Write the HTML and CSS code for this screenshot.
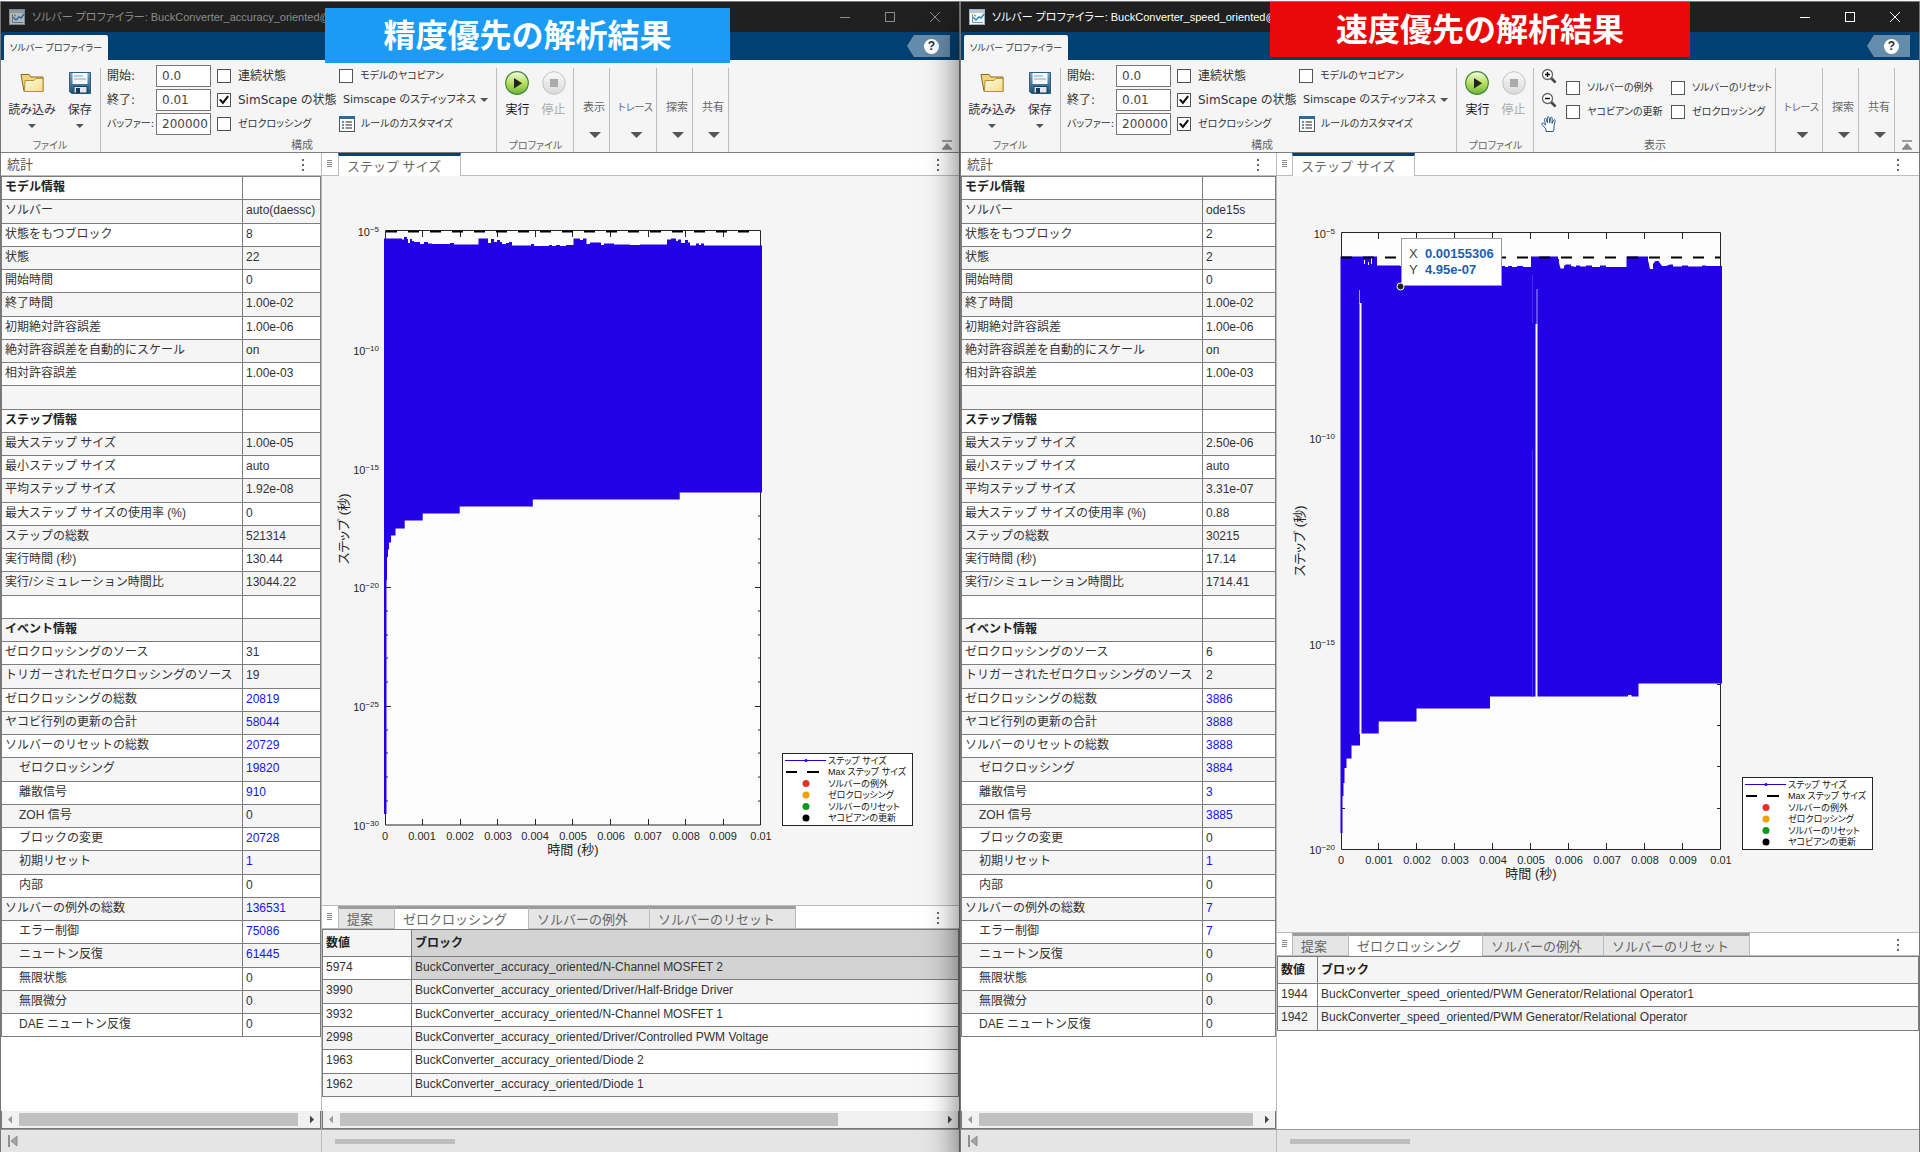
FILE: index.html
```html
<!DOCTYPE html>
<html lang="ja">
<head>
<meta charset="utf-8">
<title>ソルバー プロファイラー</title>
<link rel="stylesheet" href="styles.css">
</head>
<body>
<svg class="defs" aria-hidden="true">
  <defs>
    <linearGradient id="gFolder" x1="0" y1="0" x2="1" y2="1"><stop offset="0" stop-color="#fffdf0"/><stop offset="1" stop-color="#f6dc7c"/></linearGradient>
    <linearGradient id="gGreen" x1="0" y1="0" x2="0" y2="1"><stop offset="0" stop-color="#f4fbe6"/><stop offset=".5" stop-color="#b9e05e"/><stop offset="1" stop-color="#6db33f"/></linearGradient>
    <linearGradient id="gGray" x1="0" y1="0" x2="0" y2="1"><stop offset="0" stop-color="#fafafa"/><stop offset="1" stop-color="#d9d9d9"/></linearGradient>
    <linearGradient id="gSave" x1="0" y1="0" x2="0" y2="1"><stop offset="0" stop-color="#79a7c6"/><stop offset="1" stop-color="#1d4f78"/></linearGradient>
  </defs>
  <symbol id="i-app" viewBox="0 0 16 16"><rect x=".5" y=".5" width="15" height="15" fill="#f4f8fa" stroke="#9fb6c4"/><rect x="1" y="1" width="14" height="3" fill="#b9c9d3"/><path d="M3.5 5v8.5H14" fill="none" stroke="#7d97a8"/><path d="M4 8l3 3 3-3 2 1 3-4" fill="none" stroke="#2a8fd0" stroke-width="1.5"/><path d="M5 6l2 1" stroke="#e0a030" stroke-width="1.5"/></symbol>
  <symbol id="i-folder" viewBox="0 0 24 20"><path d="M1 1.500h8l2 2.500h12v14.500H4z" fill="#f3d37a" stroke="#8a6a1e"/><path d="M5 7.500h9l2-2h7v13H4.500z" fill="url(#gFolder)" stroke="#b98e2e"/></symbol>
  <symbol id="i-save" viewBox="0 0 22 22"><path d="M.5.5h21v21H2.500l-2-2z" fill="url(#gSave)" stroke="#2c5f86"/><rect x="3.500" y="1" width="15" height="11" fill="#f7fafc"/><path d="M5 4h9M5 7h12" stroke="#7f9fb8"/><path d="M5 14.500h13V21H5z" fill="#e4e7ea" stroke="#1b3f5e"/><rect x="7" y="16" width="4" height="5" fill="#143a5a"/></symbol>
  <symbol id="i-run" viewBox="0 0 24 24"><circle cx="12" cy="12" r="11.300" fill="url(#gGreen)" stroke="#3f8a35" stroke-width="1.200"/><path d="M9 7v10.500l8-5.300z" fill="#222"/></symbol>
  <symbol id="i-stop" viewBox="0 0 24 24"><circle cx="12" cy="12" r="11.300" fill="url(#gGray)" stroke="#c2c2c2"/><rect x="8" y="8" width="8" height="8" fill="#ababab"/></symbol>
  <symbol id="i-rule" viewBox="0 0 16 16"><rect x=".5" y=".5" width="15" height="15" fill="#fdfdfd" stroke="#555"/><rect x="0" y="0" width="16" height="3" fill="#2d6a9a"/><path d="M3 6h2M3 9h2M3 12h2" stroke="#2d6a9a" stroke-width="1.500"/><path d="M6.500 6H13M6.500 9H13M6.500 12H13" stroke="#222" stroke-width="1.200"/></symbol>
  <symbol id="i-zin" viewBox="0 0 16 16"><path d="M10 10l4.500 4.500" stroke="#444" stroke-width="2.500"/><circle cx="6.500" cy="6.500" r="5" fill="#fff" stroke="#666" stroke-width="1.300"/><path d="M4 6.500h5M6.500 4v5" stroke="#111" stroke-width="1.500"/></symbol>
  <symbol id="i-zout" viewBox="0 0 16 16"><path d="M10 10l4.500 4.500" stroke="#444" stroke-width="2.500"/><circle cx="6.500" cy="6.500" r="5" fill="#fff" stroke="#666" stroke-width="1.300"/><path d="M4 6.500h5" stroke="#111" stroke-width="1.500"/></symbol>
  <symbol id="i-hand" viewBox="0 0 16 16"><path d="M5 15.500V13L1 8.500c-.8-1 .5-2 1.500-1.200L4.500 9 3.500 3.500c-.2-1.300 1.300-1.600 1.700-.4L6.500 7 6.300 1.600c0-1.300 1.700-1.300 1.800 0L8.700 7l.8-5c.2-1.200 1.800-1 1.700.3L11 7.500l1.500-3.300c.5-1.100 2-.5 1.600.7L13 10v3l-.8 2.500z" fill="#fff" stroke="#2c5f8e"/></symbol>
  <symbol id="i-min" viewBox="0 0 10 10"><path d="M0 5.500h10" stroke="currentColor"/></symbol>
  <symbol id="i-max" viewBox="0 0 10 10"><rect x=".5" y=".5" width="9" height="9" fill="none" stroke="currentColor"/></symbol>
  <symbol id="i-close" viewBox="0 0 10 10"><path d="M0 0l10 10M10 0L0 10" stroke="currentColor"/></symbol>
  <symbol id="i-collapse" viewBox="0 0 10 10"><path d="M0 1h10M0 9.500h10" stroke="#a0a0a0" stroke-width="2"/><path d="M5 3l5 6H0z" fill="#8a8a8a"/></symbol>
  <symbol id="i-first" viewBox="0 0 10 12"><path d="M1 0v12" stroke="#8f8f8f" stroke-width="2"/><path d="M9 1v10L3 6z" fill="#a5a5a5" stroke="#8f8f8f"/></symbol>
</svg>

<main class="desktop">

<section class="window inactive w-accuracy">
  <header class="titlebar">
    <svg class="app-icon"><use href="#i-app"/></svg>
    <h1>ソルバー プロファイラー: BuckConverter_accuracy_oriented@</h1>
    <div class="controls">
      <button aria-label="最小化"><svg><use href="#i-min"/></svg></button>
      <button aria-label="最大化"><svg><use href="#i-max"/></svg></button>
      <button aria-label="閉じる"><svg><use href="#i-close"/></svg></button>
    </div>
  </header>
  <nav class="ribbon-tabs"><button class="ribbon-tab">ソルバー プロファイラー</button><button class="help" aria-label="ヘルプ"><span>?</span></button></nav>
  <div class="banner blue">精度優先の解析結果</div>

  <div class="toolstrip">
    <div class="section file">
      <div class="big-buttons">
        <button class="big"><svg class="folder"><use href="#i-folder"/></svg><span>読み込み</span><i class="caret"></i></button>
        <button class="big"><svg class="save"><use href="#i-save"/></svg><span>保存</span><i class="caret"></i></button>
      </div>
      <div class="section-name kana">ファイル</div>
    </div>
    <div class="section config">
      <div class="config-grid">
        <label for="a-start">開始:</label><input id="a-start" type="text" value="0.0">
        <label class="check"><input type="checkbox">連続状態</label>
        <label class="check kana"><input type="checkbox">モデルのヤコビアン</label>
        <label for="a-stop">終了:</label><input id="a-stop" type="text" value="0.01">
        <label class="check"><input type="checkbox" checked>SimScape の状態</label>
        <button class="drop">Simscape のスティッフネス<i class="caret"></i></button>
        <label class="kana" for="a-buf">バッファー:</label><input id="a-buf" type="text" value="200000">
        <label class="check kana"><input type="checkbox">ゼロクロッシング</label>
        <button class="rule kana"><svg><use href="#i-rule"/></svg>ルールのカスタマイズ</button>
      </div>
      <div class="section-name">構成</div>
    </div>
    <div class="section profile">
      <div class="big-buttons">
        <button class="big run"><svg><use href="#i-run"/></svg><span>実行</span></button>
        <button class="big stop" disabled><svg><use href="#i-stop"/></svg><span>停止</span></button>
      </div>
      <div class="section-name kana">プロファイル</div>
    </div>
    <button class="section folded">表示<i class="caret wide"></i></button>
    <button class="section folded trace">トレース<i class="caret wide"></i></button>
    <button class="section folded">探索<i class="caret wide"></i></button>
    <button class="section folded">共有<i class="caret wide"></i></button>
    <button class="collapse" aria-label="折りたたむ"><svg><use href="#i-collapse"/></svg></button>
  </div>

  <div class="content">
    <section class="stats">
      <header class="panel-head"><h2>統計</h2><button class="dots" aria-label="メニュー"></button></header>
      <table class="stats-table">
        <tr><th>モデル情報</th><td></td></tr>
        <tr><td>ソルバー</td><td>auto(daessc)</td></tr>
        <tr><td>状態をもつブロック</td><td>8</td></tr>
        <tr><td>状態</td><td>22</td></tr>
        <tr><td>開始時間</td><td>0</td></tr>
        <tr><td>終了時間</td><td>1.00e-02</td></tr>
        <tr><td>初期絶対許容誤差</td><td>1.00e-06</td></tr>
        <tr><td>絶対許容誤差を自動的にスケール</td><td>on</td></tr>
        <tr><td>相対許容誤差</td><td>1.00e-03</td></tr>
        <tr><td></td><td></td></tr>
        <tr><th>ステップ情報</th><td></td></tr>
        <tr><td>最大ステップ サイズ</td><td>1.00e-05</td></tr>
        <tr><td>最小ステップ サイズ</td><td>auto</td></tr>
        <tr><td>平均ステップ サイズ</td><td>1.92e-08</td></tr>
        <tr><td>最大ステップ サイズの使用率 (%)</td><td>0</td></tr>
        <tr><td>ステップの総数</td><td>521314</td></tr>
        <tr><td>実行時間 (秒)</td><td>130.44</td></tr>
        <tr><td>実行/シミュレーション時間比</td><td>13044.22</td></tr>
        <tr><td></td><td></td></tr>
        <tr><th>イベント情報</th><td></td></tr>
        <tr><td>ゼロクロッシングのソース</td><td>31</td></tr>
        <tr><td>トリガーされたゼロクロッシングのソース</td><td>19</td></tr>
        <tr><td>ゼロクロッシングの総数</td><td><a href="#">20819</a></td></tr>
        <tr><td>ヤコビ行列の更新の合計</td><td><a href="#">58044</a></td></tr>
        <tr><td>ソルバーのリセットの総数</td><td><a href="#">20729</a></td></tr>
        <tr class="sub"><td>ゼロクロッシング</td><td><a href="#">19820</a></td></tr>
        <tr class="sub"><td>離散信号</td><td><a href="#">910</a></td></tr>
        <tr class="sub"><td>ZOH 信号</td><td>0</td></tr>
        <tr class="sub"><td>ブロックの変更</td><td><a href="#">20728</a></td></tr>
        <tr class="sub"><td>初期リセット</td><td><a href="#">1</a></td></tr>
        <tr class="sub"><td>内部</td><td>0</td></tr>
        <tr><td>ソルバーの例外の総数</td><td><a href="#">136531</a></td></tr>
        <tr class="sub"><td>エラー制御</td><td><a href="#">75086</a></td></tr>
        <tr class="sub"><td>ニュートン反復</td><td><a href="#">61445</a></td></tr>
        <tr class="sub"><td>無限状態</td><td>0</td></tr>
        <tr class="sub"><td>無限微分</td><td>0</td></tr>
        <tr class="sub"><td>DAE ニュートン反復</td><td>0</td></tr>
      </table>
      <div class="scroll"><i class="arrow-left"></i><span class="thumb"></span><i class="arrow-right"></i></div>
    </section>

    <div class="right">
      <section class="plot">
        <header class="panel-head tabs"><i class="grip"></i><button class="tab current">ステップ サイズ</button><button class="dots" aria-label="メニュー"></button></header>
        <svg class="figure" viewBox="322 176 637 729">
          <rect x="385" y="231" width="376" height="594" fill="#fcfcfc"/>
          <path d="M385.500 230.500H760.500V825H385.500z" class="axis"/>
          <path class="axis" d="M422.500 231v6M460.500 231v6M497.500 231v6M535.500 231v6M572.500 231v6M610.500 231v6M648.500 231v6M685.500 231v6M723.500 231v6M422.500 825v-6M460.500 825v-6M497.500 825v-6M535.500 825v-6M572.500 825v-6M610.500 825v-6M648.500 825v-6M685.500 825v-6M723.500 825v-6"/>
          <path class="axis" d="M386 587.500h5M386 706.500h5M760 587.500h-5M760 706.500h-5M760 516h-2M760 539h-2M760 563h-2M760 611h-2M760 635h-2M760 658h-2M760 682h-2M760 730h-2M760 753h-2M760 777h-2M760 801h-2M386 611h2M386 635h2M386 658h2M386 682h2M386 730h2M386 753h2M386 777h2M386 801h2"/>
          <path d="M386 231.500h374" stroke="#000" stroke-width="2" stroke-dasharray="11 11"/>
          <path class="data" d="M384 238.500H402V239.500H404V237H407V239H408V243H410V239H412V241H414V242H420V244H424V242H428V243.500H432V244H450V243H454V244.500H478.500V238.500H488V243H491V239H494V242H497V240H500V242H502V244H506V243H509V242H512V245.500H531V244H534V246H549V245H552V246H556V245H560V246H566V245H573.500V238.500H580V240H583V238.500H586.500V244H590V242.500H601V245H604V243.500H614V244.500H630V245H640V244.500H667V239.500H671V238.500H676V241H678V239.500H681V243H685V240H688V242.500H690V245.500H696V243.500H699V245H701V243.500H704V245.500H762V492.500H679.700V499.500H532.800V506.500H459.700V513.500H422.700V520.500H404.700V528.500H395.500V535.500H391V542.500H389V549.500H388V557H387V580H386.500V814H384z"/>
          <g class="ticks">
            <text x="385" y="840">0</text><text x="422" y="840">0.001</text><text x="460" y="840">0.002</text><text x="498" y="840">0.003</text><text x="535" y="840">0.004</text><text x="573" y="840">0.005</text><text x="611" y="840">0.006</text><text x="648" y="840">0.007</text><text x="686" y="840">0.008</text><text x="723" y="840">0.009</text><text x="761" y="840">0.01</text>
          </g>
          <g class="ylabels">
            <text x="379" y="236">10<tspan class="exp" dy="-4">−5</tspan></text>
            <text x="379" y="355">10<tspan class="exp" dy="-4">−10</tspan></text>
            <text x="379" y="474">10<tspan class="exp" dy="-4">−15</tspan></text>
            <text x="379" y="592">10<tspan class="exp" dy="-4">−20</tspan></text>
            <text x="379" y="711">10<tspan class="exp" dy="-4">−25</tspan></text>
            <text x="379" y="830">10<tspan class="exp" dy="-4">−30</tspan></text>
          </g>
          <text class="axis-title" x="573" y="854">時間 (秒)</text>
          <text class="axis-title" transform="translate(348 529) rotate(-90)">ステップ (秒)</text>
          <g class="legend" transform="translate(782 753)">
            <rect x=".5" y=".5" width="130" height="72"/>
            <path d="M3 7.500h41" stroke="#2400e6"/><circle cx="24" cy="7.500" r="1.500" fill="#2400e6"/>
            <path d="M4 19h11M25 19h12" stroke="#000" stroke-width="2"/>
            <circle cx="24" cy="30.500" r="3.500" fill="#e0352b"/><circle cx="24" cy="42" r="3.500" fill="#eda100"/><circle cx="24" cy="53.500" r="3.500" fill="#0b9a1c"/><circle cx="24" cy="65" r="3.500" fill="#000"/>
            <text x="46" y="11">ステップ サイズ</text><text x="46" y="22">Max ステップ サイズ</text><text x="46" y="34">ソルバーの例外</text><text x="46" y="45">ゼロクロッシング</text><text x="46" y="57">ソルバーのリセット</text><text x="46" y="68">ヤコビアンの更新</text>
          </g>
        </svg>
      </section>
      <section class="details">
        <header class="panel-head tabs"><i class="grip"></i><button class="tab t1">提案</button><button class="tab t2 open">ゼロクロッシング</button><button class="tab t3">ソルバーの例外</button><button class="tab t4">ソルバーのリセット</button><button class="dots" aria-label="メニュー"></button></header>
        <table class="blocks">
          <tr><th>数値</th><th class="picked">ブロック</th></tr>
          <tr><td>5974</td><td class="picked">BuckConverter_accuracy_oriented/N-Channel MOSFET 2</td></tr>
          <tr><td>3990</td><td>BuckConverter_accuracy_oriented/Driver/Half-Bridge Driver</td></tr>
          <tr><td>3932</td><td>BuckConverter_accuracy_oriented/N-Channel MOSFET 1</td></tr>
          <tr><td>2998</td><td>BuckConverter_accuracy_oriented/Driver/Controlled PWM Voltage</td></tr>
          <tr><td>1963</td><td>BuckConverter_accuracy_oriented/Diode 2</td></tr>
          <tr><td>1962</td><td>BuckConverter_accuracy_oriented/Diode 1</td></tr>
        </table>
        <div class="scroll"><i class="arrow-left"></i><span class="thumb"></span><i class="arrow-right"></i></div>
      </section>
    </div>
  </div>
  <footer class="statusbar"><div class="status-left"><svg><use href="#i-first"/></svg></div><div class="status-right"><span class="thumb"></span></div></footer>
</section>

<section class="window w-speed">
  <header class="titlebar">
    <svg class="app-icon"><use href="#i-app"/></svg>
    <h1>ソルバー プロファイラー: BuckConverter_speed_oriented@</h1>
    <div class="controls">
      <button aria-label="最小化"><svg><use href="#i-min"/></svg></button>
      <button aria-label="最大化"><svg><use href="#i-max"/></svg></button>
      <button aria-label="閉じる"><svg><use href="#i-close"/></svg></button>
    </div>
  </header>
  <nav class="ribbon-tabs"><button class="ribbon-tab">ソルバー プロファイラー</button><button class="help" aria-label="ヘルプ"><span>?</span></button></nav>
  <div class="banner red">速度優先の解析結果</div>

  <div class="toolstrip">
    <div class="section file">
      <div class="big-buttons">
        <button class="big"><svg class="folder"><use href="#i-folder"/></svg><span>読み込み</span><i class="caret"></i></button>
        <button class="big"><svg class="save"><use href="#i-save"/></svg><span>保存</span><i class="caret"></i></button>
      </div>
      <div class="section-name kana">ファイル</div>
    </div>
    <div class="section config">
      <div class="config-grid">
        <label for="s-start">開始:</label><input id="s-start" type="text" value="0.0">
        <label class="check"><input type="checkbox">連続状態</label>
        <label class="check kana"><input type="checkbox">モデルのヤコビアン</label>
        <label for="s-stop">終了:</label><input id="s-stop" type="text" value="0.01">
        <label class="check"><input type="checkbox" checked>SimScape の状態</label>
        <button class="drop">Simscape のスティッフネス<i class="caret"></i></button>
        <label class="kana" for="s-buf">バッファー:</label><input id="s-buf" type="text" value="200000">
        <label class="check kana"><input type="checkbox" checked>ゼロクロッシング</label>
        <button class="rule kana"><svg><use href="#i-rule"/></svg>ルールのカスタマイズ</button>
      </div>
      <div class="section-name">構成</div>
    </div>
    <div class="section profile">
      <div class="big-buttons">
        <button class="big run"><svg><use href="#i-run"/></svg><span>実行</span></button>
        <button class="big stop" disabled><svg><use href="#i-stop"/></svg><span>停止</span></button>
      </div>
      <div class="section-name kana">プロファイル</div>
    </div>
    <div class="section display">
      <div class="display-body">
        <div class="tools">
          <button aria-label="拡大"><svg><use href="#i-zin"/></svg></button>
          <button aria-label="縮小"><svg><use href="#i-zout"/></svg></button>
          <button aria-label="パン"><svg><use href="#i-hand"/></svg></button>
        </div>
        <div class="display-grid">
          <label class="check kana"><input type="checkbox">ソルバーの例外</label>
          <label class="check kana"><input type="checkbox">ソルバーのリセット</label>
          <label class="check kana"><input type="checkbox">ヤコビアンの更新</label>
          <label class="check kana"><input type="checkbox">ゼロクロッシング</label>
        </div>
      </div>
      <div class="section-name">表示</div>
    </div>
    <button class="section folded trace">トレース<i class="caret wide"></i></button>
    <button class="section folded">探索<i class="caret wide"></i></button>
    <button class="section folded">共有<i class="caret wide"></i></button>
    <button class="collapse" aria-label="折りたたむ"><svg><use href="#i-collapse"/></svg></button>
  </div>

  <div class="content">
    <section class="stats">
      <header class="panel-head"><h2>統計</h2><button class="dots" aria-label="メニュー"></button></header>
      <table class="stats-table">
        <tr><th>モデル情報</th><td></td></tr>
        <tr><td>ソルバー</td><td>ode15s</td></tr>
        <tr><td>状態をもつブロック</td><td>2</td></tr>
        <tr><td>状態</td><td>2</td></tr>
        <tr><td>開始時間</td><td>0</td></tr>
        <tr><td>終了時間</td><td>1.00e-02</td></tr>
        <tr><td>初期絶対許容誤差</td><td>1.00e-06</td></tr>
        <tr><td>絶対許容誤差を自動的にスケール</td><td>on</td></tr>
        <tr><td>相対許容誤差</td><td>1.00e-03</td></tr>
        <tr><td></td><td></td></tr>
        <tr><th>ステップ情報</th><td></td></tr>
        <tr><td>最大ステップ サイズ</td><td>2.50e-06</td></tr>
        <tr><td>最小ステップ サイズ</td><td>auto</td></tr>
        <tr><td>平均ステップ サイズ</td><td>3.31e-07</td></tr>
        <tr><td>最大ステップ サイズの使用率 (%)</td><td>0.88</td></tr>
        <tr><td>ステップの総数</td><td>30215</td></tr>
        <tr><td>実行時間 (秒)</td><td>17.14</td></tr>
        <tr><td>実行/シミュレーション時間比</td><td>1714.41</td></tr>
        <tr><td></td><td></td></tr>
        <tr><th>イベント情報</th><td></td></tr>
        <tr><td>ゼロクロッシングのソース</td><td>6</td></tr>
        <tr><td>トリガーされたゼロクロッシングのソース</td><td>2</td></tr>
        <tr><td>ゼロクロッシングの総数</td><td><a href="#">3886</a></td></tr>
        <tr><td>ヤコビ行列の更新の合計</td><td><a href="#">3888</a></td></tr>
        <tr><td>ソルバーのリセットの総数</td><td><a href="#">3888</a></td></tr>
        <tr class="sub"><td>ゼロクロッシング</td><td><a href="#">3884</a></td></tr>
        <tr class="sub"><td>離散信号</td><td><a href="#">3</a></td></tr>
        <tr class="sub"><td>ZOH 信号</td><td><a href="#">3885</a></td></tr>
        <tr class="sub"><td>ブロックの変更</td><td>0</td></tr>
        <tr class="sub"><td>初期リセット</td><td><a href="#">1</a></td></tr>
        <tr class="sub"><td>内部</td><td>0</td></tr>
        <tr><td>ソルバーの例外の総数</td><td><a href="#">7</a></td></tr>
        <tr class="sub"><td>エラー制御</td><td><a href="#">7</a></td></tr>
        <tr class="sub"><td>ニュートン反復</td><td>0</td></tr>
        <tr class="sub"><td>無限状態</td><td>0</td></tr>
        <tr class="sub"><td>無限微分</td><td>0</td></tr>
        <tr class="sub"><td>DAE ニュートン反復</td><td>0</td></tr>
      </table>
      <div class="scroll"><i class="arrow-left"></i><span class="thumb"></span><i class="arrow-right"></i></div>
    </section>

    <div class="right">
      <section class="plot">
        <header class="panel-head tabs"><i class="grip"></i><button class="tab current">ステップ サイズ</button><button class="dots" aria-label="メニュー"></button></header>
        <svg class="figure" viewBox="317 176 642 756">
          <rect x="381" y="232" width="380" height="617" fill="#fcfcfc"/>
          <path d="M381.500 232.500H760.500V849.500H381.500z" class="axis"/>
          <path class="axis" d="M418.500 233v6M456.500 233v6M494.500 233v6M532.500 233v6M570.500 233v6M608.500 233v6M646.500 233v6M684.500 233v6M722.500 233v6M418.500 849v-6M456.500 849v-6M494.500 849v-6M532.500 849v-6M570.500 849v-6M608.500 849v-6M646.500 849v-6M684.500 849v-6M722.500 849v-6"/>
          <path class="axis" d="M760 684.500h-3M760 725.500h-3M760 766.500h-3M760 808.500h-3M382 808.500h3"/>
          <path class="data" d="M380.500 256.500H417V265.500H440V266H545V267H548V266H552V267H557V266H563V267H571V256.500H598V259H599V263L600.500 268.500H604V266L606 264.500H611V266L616 267V265.500H620V266.500H626V265.500H632V267H640V265.500H646V267H666.500V256.500H688V260L690 269H693V264L695.500 261H698.500L702 266H706L710 264.500H713V266.500H722V265.500H728V266.500H742V265.500H746V266H762V683.500H678.500V696.500H671.500V695H668V696.500H530V708.500H456.500V721.500H418.700V733.500H400V745.500H391.500V758.500H386.500V768H384.500V783H383.500V796H382.500V833H380.500z"/>
          <path d="M399.500 290v14M577 289v36" stroke="#a79cf5"/>
          <path d="M400.500 303V734M576.500 324V697" stroke="#fcfcfc" stroke-width="2"/>
          <path d="M572.500 275v48M572.500 450V697" stroke="#4a2cec"/>
          <path d="M404.500 260v4M408.500 262v3M411.500 258v6" stroke="#fcfcfc" stroke-width="1"/>
          <path d="M381 257.500h379" stroke="#000" stroke-width="2" stroke-dasharray="11 11"/>
          <rect x="441.500" y="238.500" width="100" height="47" fill="#fff" stroke="#999"/>
          <circle cx="440.500" cy="286.500" r="3.500" fill="#222" stroke="#fff"/>
          <g class="tip"><text x="449" y="258">X</text><text class="v" x="465" y="258">0.00155306</text><text x="449" y="274">Y</text><text class="v" x="465" y="274">4.95e-07</text></g>
          <g class="ticks">
            <text x="381" y="864">0</text><text x="419" y="864">0.001</text><text x="457" y="864">0.002</text><text x="495" y="864">0.003</text><text x="533" y="864">0.004</text><text x="571" y="864">0.005</text><text x="609" y="864">0.006</text><text x="647" y="864">0.007</text><text x="685" y="864">0.008</text><text x="723" y="864">0.009</text><text x="761" y="864">0.01</text>
          </g>
          <g class="ylabels">
            <text x="375" y="238">10<tspan class="exp" dy="-4">−5</tspan></text>
            <text x="375" y="443">10<tspan class="exp" dy="-4">−10</tspan></text>
            <text x="375" y="649">10<tspan class="exp" dy="-4">−15</tspan></text>
            <text x="375" y="854">10<tspan class="exp" dy="-4">−20</tspan></text>
          </g>
          <text class="axis-title" x="571" y="878">時間 (秒)</text>
          <text class="axis-title" transform="translate(344 541) rotate(-90)">ステップ (秒)</text>
          <g class="legend" transform="translate(782 777)">
            <rect x=".5" y=".5" width="130" height="72"/>
            <path d="M3 7.500h41" stroke="#2400e6"/><circle cx="24" cy="7.500" r="1.500" fill="#2400e6"/>
            <path d="M4 19h11M25 19h12" stroke="#000" stroke-width="2"/>
            <circle cx="24" cy="30.500" r="3.500" fill="#e0352b"/><circle cx="24" cy="42" r="3.500" fill="#eda100"/><circle cx="24" cy="53.500" r="3.500" fill="#0b9a1c"/><circle cx="24" cy="65" r="3.500" fill="#000"/>
            <text x="46" y="11">ステップ サイズ</text><text x="46" y="22">Max ステップ サイズ</text><text x="46" y="34">ソルバーの例外</text><text x="46" y="45">ゼロクロッシング</text><text x="46" y="57">ソルバーのリセット</text><text x="46" y="68">ヤコビアンの更新</text>
          </g>
        </svg>
      </section>
      <section class="details">
        <header class="panel-head tabs"><i class="grip"></i><button class="tab t1">提案</button><button class="tab t2 open">ゼロクロッシング</button><button class="tab t3">ソルバーの例外</button><button class="tab t4">ソルバーのリセット</button><button class="dots" aria-label="メニュー"></button></header>
        <table class="blocks">
          <tr><th>数値</th><th>ブロック</th></tr>
          <tr><td>1944</td><td>BuckConverter_speed_oriented/PWM Generator/Relational Operator1</td></tr>
          <tr><td>1942</td><td>BuckConverter_speed_oriented/PWM Generator/Relational Operator</td></tr>
        </table>
      </section>
    </div>
  </div>
  <footer class="statusbar"><div class="status-left"><svg><use href="#i-first"/></svg></div><div class="status-right"><span class="thumb"></span></div></footer>
</section>

</main>
</body>
</html>
```
FILE: styles.css
```css
* { box-sizing: border-box; }

body {
  margin: 0;
  padding-top: 1px;
  background: #fff;
  color: #333;
  font: 12px/18px "Liberation Sans", "Noto Sans CJK JP", sans-serif;
}

h1, h2 { margin: 0; font-weight: 400; }

button {
  margin: 0;
  padding: 0;
  border: 0;
  background: none;
  color: inherit;
  font: inherit;
  white-space: nowrap;
}

svg { display: block; flex: none; }
i { display: block; flex: none; }
.defs { position: absolute; width: 0; height: 0; }

.desktop {
  display: grid;
  grid-template-columns: 1fr 1fr;
  min-height: calc(100vh - 1px);
}

.window {
  position: relative;
  display: flex;
  flex-direction: column;
  min-width: 0;
  border: 1px solid #777;
  border-bottom: 0;
  background: #f5f5f5;
}
.w-accuracy { --stats: 321px; --lower: 224px; --count: 89px; overflow: hidden; }
.w-speed { --stats: 316px; --lower: 197px; --count: 40px; z-index: 1; box-shadow: 0 24px 32px rgba(0, 0, 0, .6); }

/* Title bar */
.titlebar {
  display: flex;
  align-items: center;
  height: 30px;
  padding: 0 8px;
  background: #202020;
  color: #fff;
}
.inactive .titlebar { color: #8c8c8c; }
.app-icon { width: 16px; height: 16px; }
.inactive .app-icon { opacity: .7; }
.titlebar h1 {
  flex: 1;
  margin-left: 7px;
  font-size: 11px;
  font-feature-settings: "palt";
  white-space: nowrap;
}
.controls { display: flex; margin-right: 11px; gap: 35px; }
.controls svg { width: 10px; height: 10px; }

.ribbon-tabs {
  display: flex;
  justify-content: space-between;
  height: 28px;
  padding: 3px 9px 0 3px;
  background: #004073;
}
.ribbon-tab {
  width: 104px;
  border-radius: 2px 2px 0 0;
  background: #f5f5f5;
  font-size: 9px;
  font-feature-settings: "palt";
}
.help {
  display: grid;
  place-items: center;
  width: 43px;
  height: 22px;
  padding-left: 6px;
  background: #668cab;
  clip-path: polygon(7px 0, 100% 0, 100% 100%, 7px 100%, 0 50%);
}
.help span {
  width: 15px;
  height: 15px;
  border-radius: 50%;
  background: #fff;
  color: #1c2f45;
  font-weight: 700;
  line-height: 15px;
}

.banner {
  position: absolute;
  height: 55px;
  color: #fff;
  font: 700 32px/50px "Noto Sans CJK JP", sans-serif;
  text-align: center;
}
.blue { top: 6px; left: 324px; width: 405px; background: #1b9bf3; }
.red { top: 0; left: 309px; width: 420px; background: #e90909; }

/* Toolstrip */
.toolstrip {
  display: flex;
  height: 93px;
  border-bottom: 1px solid #7d7d7d;
  background: #f5f5f5;
  font-family: "DejaVu Sans", "Noto Sans CJK JP", sans-serif;
  font-feature-settings: "palt";
}
.section {
  display: flex;
  flex: none;
  flex-direction: column;
  background: linear-gradient(#bdbdbd, #bdbdbd) right bottom / 1px 84px no-repeat;
}
.section-name {
  margin-top: auto;
  color: #666;
  font-size: 11px;
  line-height: 12px;
  text-align: center;
}
.file { width: 100px; padding-right: 2px; }
.config { width: 396px; padding-left: 6px; }
.profile { width: 77px; }
.display { width: 242px; }
.folded { width: 36px; align-items: center; padding: 39px 0 0 4px; color: #666; font-size: 11px; }
.trace { width: 47px; font-size: 10px; }
.folded .caret { margin: 15px 0 0 2px; }

.big-buttons { display: flex; justify-content: center; gap: 12px; padding-top: 11px; }
.big { display: flex; flex-direction: column; align-items: center; }
.big span { margin-top: 6px; }
.big svg { width: 24px; height: 24px; }
.big .folder { height: 20px; margin: 2px 0; }
.big .save { width: 22px; height: 22px; margin: 1px 0; }
.big .caret { margin-top: 5px; }
.stop { color: #aaa; }
.run { color: #111; }

.caret {
  width: 8px;
  height: 4px;
  background: #555;
  clip-path: polygon(0 0, 100% 0, 50% 100%);
}
.caret.wide { width: 12px; height: 6px; }

.config-grid {
  display: grid;
  grid-template-columns: 49px 61px 122px 1fr;
  grid-auto-rows: 24px;
  align-items: center;
  padding-top: 4px;
}
label { white-space: nowrap; }
.kana { font-size: 10px; }
input[type="text"] {
  width: 55px;
  height: 22px;
  padding: 0 0 0 5px;
  border: 1px solid #777;
  background: #fff;
  color: #444;
  font: 12px "DejaVu Sans", sans-serif;
}
.check { display: flex; align-items: center; gap: 7px; }
input[type="checkbox"] {
  display: grid;
  flex: none;
  width: 14px;
  height: 14px;
  margin: 0;
  border: 1px solid #555;
  background: #fff;
  appearance: none;
}
input[type="checkbox"]:checked::before {
  content: "";
  margin: 1px;
  background: #111;
  clip-path: polygon(0 50%, 18% 38%, 38% 62%, 84% 6%, 100% 18%, 40% 96%);
}
.drop { display: flex; align-items: center; gap: 4px; padding-left: 4px; font-size: 11px; }
.rule { display: flex; align-items: center; gap: 6px; }
.rule svg { width: 16px; height: 16px; }

.display-body { display: flex; padding-left: 7px; }
.tools { display: grid; flex: none; grid-auto-rows: 24px; align-items: center; width: 25px; padding-top: 4px; }
.tools svg { width: 16px; height: 16px; }
.display-grid {
  display: grid;
  grid-template-columns: 105px auto;
  grid-auto-rows: 24px;
  align-content: start;
  align-items: center;
  padding-top: 16px;
}
.collapse { margin: auto 7px 2px auto; }
.collapse svg { width: 10px; height: 10px; }

/* Panels */
.content { display: grid; flex: 1; grid-template-columns: var(--stats) 1fr; }
.stats { display: flex; flex-direction: column; border-right: 1px solid #bbb; background: #fff; }
.right { display: grid; grid-template-rows: 1fr var(--lower); min-width: 0; }
.plot { display: flex; flex-direction: column; background: #f5f5f5; }
.details { display: flex; flex-direction: column; border-top: 1px solid #bbb; background: #fff; }

.panel-head {
  display: flex;
  flex: none;
  align-items: stretch;
  height: 23px;
  border-bottom: 1px solid #bbb;
  background: #fff;
  color: #555;
  font-size: 13px;
  line-height: 24px;
}
.panel-head h2 { padding-left: 6px; font-size: 13px; }
.dots {
  width: 3px;
  height: 12px;
  margin: 6px 16px 0 auto;
  background: repeating-linear-gradient(#666 0 2px, transparent 2px 5px) 0 0 / 2px 12px no-repeat;
}
.plot .dots, .details .dots { margin-right: 19px; }
.grip {
  width: 16px;
  background: repeating-linear-gradient(#888 0 1px, transparent 1px 2px) 5px 7px / 5px 8px no-repeat;
}
.w-speed .grip { width: 15px; }
.tab {
  padding: 0 8px;
  border-top: 3px solid #9b9b9b;
  border-left: 1px solid #bbb;
  background: #e5e5e5;
  color: #666;
  line-height: 22px;
  text-align: left;
}
.tab.current {
  width: 123px;
  margin-bottom: -1px;
  border-top-color: #004078;
  border-right: 1px solid #bbb;
  background: #fff;
}
.tab.open { margin-bottom: -1px; background: #fff; }
.t1 { width: 56px; }
.t2 { width: 134px; }
.t3 { width: 121px; }
.t4 { width: 147px; border-right: 1px solid #bbb; }

table { width: 100%; border-collapse: collapse; table-layout: fixed; }
th, td {
  padding: 0 3px;
  border: 1px solid #7d7d7d;
  line-height: 20px;
  text-align: left;
  vertical-align: top;
  white-space: nowrap;
}
th { color: #222; }
.stats-table tr { height: 23px; }
.stats-table tr:nth-child(4n+2) { height: 24px; }
.stats-table tr:nth-child(even) { background: #f5f5f5; }
.stats-table tr > :first-child { width: 241px; }
.stats-table .sub > :first-child { padding-left: 17px; }
a { color: #1414f0; text-decoration: none; }

.blocks tr { height: 23px; }
.blocks tr:nth-child(3n) { height: 24px; }
.blocks tr:first-child { height: 27px; }
.blocks tr:first-child th { line-height: 26px; }
.blocks tr:nth-child(odd) { background: #f5f5f5; }
.blocks tr > :first-child { width: var(--count); }
.blocks .picked { background: #d3d3d3; }

.scroll {
  display: flex;
  align-items: center;
  height: 18px;
  margin-top: auto;
  padding: 0 6px;
  border: 1px solid #777;
  border-top: 0;
  background: #f1f1f1;
}
.scroll .thumb { flex: 1; height: 13px; margin: 0 12px 0 7px; background: #c1c1c1; }
.details .thumb { flex: 0 1 498px; margin-right: auto; }
.arrow-left, .arrow-right { width: 4px; height: 8px; background: #9b9b9b; }
.arrow-left { clip-path: polygon(100% 0, 100% 100%, 0 50%); }
.arrow-right { background: #444; clip-path: polygon(0 0, 100% 50%, 0 100%); }

/* Status bar */
.statusbar {
  display: grid;
  grid-template-columns: var(--stats) 1fr;
  height: 23px;
  border-top: 1px solid #999;
  background: #e5e5e5;
}
.status-left { padding: 5px 7px; border-right: 1px solid #bbb; }
.status-left svg { width: 10px; height: 12px; }
.status-right { padding: 9px 13px; }
.status-right .thumb { display: block; width: 120px; height: 5px; background: #bdbdbd; }

/* Figures */
.figure { flex: 1; width: 100%; min-height: 0; }
.axis { fill: none; stroke: #262626; }
.data { fill: #2400e6; }
.ticks, .ylabels { fill: #262626; font-size: 11px; }
.ticks { text-anchor: middle; }
.ylabels { text-anchor: end; }
.exp { font-size: 8px; }
.axis-title { fill: #262626; font-size: 13px; font-feature-settings: "palt"; text-anchor: middle; }
.legend { fill: #111; font-size: 9px; font-feature-settings: "palt"; }
.legend rect { fill: #fff; stroke: #262626; }
.tip { fill: #444; font-size: 13px; }
.tip .v { fill: #2060ac; font-weight: 700; }
```
